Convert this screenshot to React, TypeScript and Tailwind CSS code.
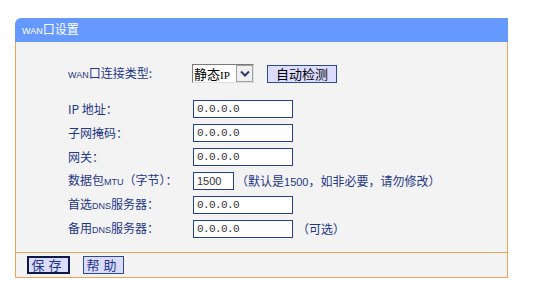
import type { ReactNode } from 'react';

const cjk = "font-['SimSun','Noto_Sans_CJK_SC',sans-serif]";

function Label({ children }: { children: ReactNode }) {
  return <div className="w-[124px] shrink-0 text-[12px] leading-[18px] text-[#1e3685]">{children}</div>;
}

function IpInput({ value, width = 'w-[100px]', sans = false }: { value: string; width?: string; sans?: boolean }) {
  return (
    <div
      className={`${width} h-[18px] border border-[#223f8c] bg-white pl-[3px] text-[11px] leading-[16px] text-[#333] ${
        sans ? "font-['Liberation_Sans',sans-serif]" : "font-['Liberation_Mono',monospace] tracking-[-0.6px]"
      }`}
    >
      {value}
    </div>
  );
}

function Small({ children }: { children: ReactNode }) {
  return <span className="font-['Liberation_Sans',sans-serif] text-[9px]">{children}</span>;
}

function Row({ label, children }: { label: ReactNode; children: ReactNode }) {
  return (
    <div className="flex h-[18px] items-center">
      <Label>{label}</Label>
      <div className="flex items-center pl-px">{children}</div>
    </div>
  );
}

export default function App() {
  return (
    <div className={`min-h-[304px] bg-white pl-[15px] pt-[18px] ${cjk}`}>
      <div className="w-[493px]">
        <div className="h-6 rounded-tl-[6px] bg-[#6699ff] pl-[7px] text-[12px] leading-[22px] text-white">
          <Small>WAN</Small>口设置
        </div>

        <div className="border-x border-[#f0a458] bg-[#f3f3f3] pb-[14px] pl-[52px] pt-[22px]">
          <div className="flex h-[19px] items-center">
            <Label>
              <Small>WAN</Small>口连接类型:
            </Label>
            <div className="flex h-[19px] w-[62px] border border-b-[#e0e0e0] border-l-[#7a7a7a] border-r-[#e0e0e0] border-t-[#7a7a7a] bg-white">
              <div className="flex-1 pl-[1px] text-[13px] leading-[17px] text-black">
                静态<span className="font-['Liberation_Serif',serif] text-[11px]">IP</span>
              </div>
              <div className="flex h-[17px] w-[17px] items-center justify-center border border-[#a0a0a0] bg-[#f0f0f0]">
                <svg width="10" height="7" viewBox="0 0 10 7">
                  <path d="M1 1.5 L5 5.5 L9 1.5" fill="none" stroke="#2a3a6a" strokeWidth="2" />
                </svg>
              </div>
            </div>
            <button className="ml-[13px] h-[18px] w-[70px] border border-[#2b4a94] bg-[#dcdcff] text-[13px] leading-[16px] text-black">
              自动检测
            </button>
          </div>

          <div className="mt-[17px] flex flex-col gap-[6px]">
            <Row label="IP 地址：">
              <IpInput value="0.0.0.0" />
            </Row>
            <Row label="子网掩码：">
              <IpInput value="0.0.0.0" />
            </Row>
            <Row label="网关：">
              <IpInput value="0.0.0.0" />
            </Row>
            <Row
              label={
                <>
                  数据包<Small>MTU</Small>（字节）：
                </>
              }
            >
              <IpInput value="1500" width="w-[41px]" sans />
              <span className="ml-[2px] text-[12px] text-[#1e3685]">
                （默认是<span className="font-['Liberation_Sans',sans-serif] text-[11px]">1500</span>，如非必要，请勿修改）
              </span>
            </Row>
            <Row
              label={
                <>
                  首选<Small>DNS</Small>服务器：
                </>
              }
            >
              <IpInput value="0.0.0.0" />
            </Row>
            <Row
              label={
                <>
                  备用<Small>DNS</Small>服务器：
                </>
              }
            >
              <IpInput value="0.0.0.0" />
              <span className="ml-[4px] text-[12px] text-[#1e3685]">（可选）</span>
            </Row>
          </div>
        </div>

        <div className="flex h-[26px] items-center gap-[13px] border border-[#f0a458] bg-[#f3f3f3] pl-[11px]">
          <button className="h-[18px] w-[43px] border-2 border-[#0d1a4a] bg-[#dcdcff] text-[13px] leading-[14px] tracking-[4px] text-[#1e3685]">
            保存
          </button>
          <button className="h-[18px] w-[41px] border border-[#2b4a94] bg-[#dcdcff] text-[13px] leading-[16px] tracking-[4px] text-[#1e3685]">
            帮助
          </button>
        </div>
      </div>
    </div>
  );
}
